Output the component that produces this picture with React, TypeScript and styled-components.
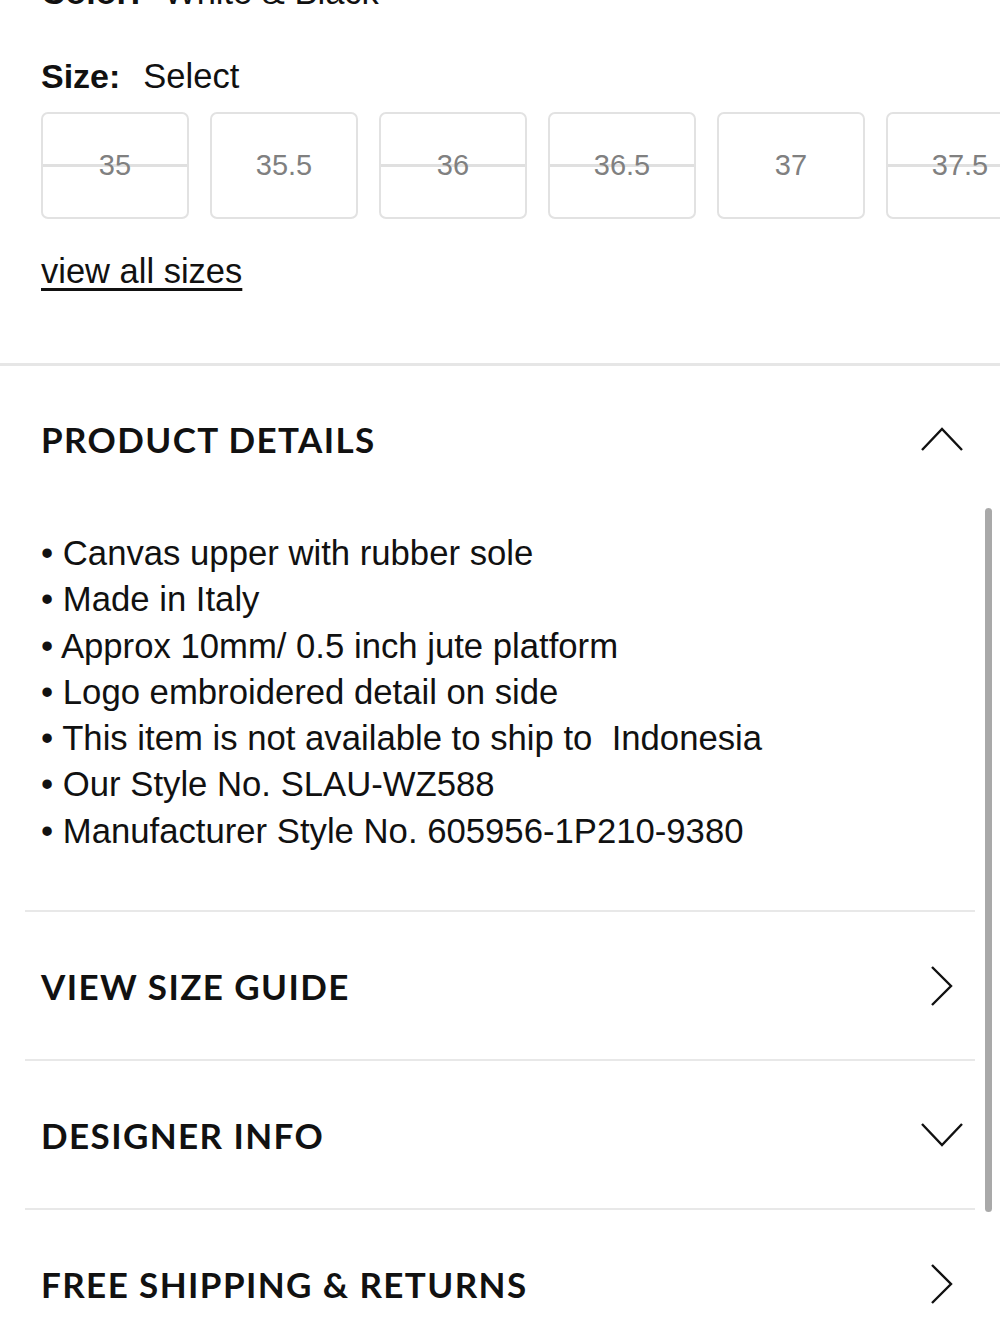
import styled, { createGlobalStyle } from "styled-components";

const GlobalStyle = createGlobalStyle`
  html, body {
    margin: 0;
    padding: 0;
    background: #fff;
  }
  body {
    font-family: "Liberation Sans", Arial, sans-serif;
    color: #111;
    overflow: hidden;
  }
`;

const sizes = [
  { label: "35", available: false },
  { label: "35.5", available: true },
  { label: "36", available: false },
  { label: "36.5", available: false },
  { label: "37", available: true },
  { label: "37.5", available: false },
];

const details = [
  "Canvas upper with rubber sole",
  "Made in Italy",
  "Approx 10mm/ 0.5 inch jute platform",
  "Logo embroidered detail on side",
  "This item is not available to ship to\u00a0 Indonesia",
  "Our Style No. SLAU-WZ588",
  "Manufacturer Style No. 605956-1P210-9380",
];

function Chevron({ dir }: { dir: "up" | "down" | "right" }) {
  if (dir === "right") {
    return (
      <svg width="44" height="44" viewBox="0 0 44 44">
        <polyline points="12,3 31,22 12,41" fill="none" stroke="#111" strokeWidth="2.4" />
      </svg>
    );
  }
  const pts = dir === "up" ? "1,33 21,12 41,33" : "1,11 21,32 41,11";
  return (
    <svg width="44" height="44" viewBox="0 0 44 44">
      <polyline points={pts} fill="none" stroke="#111" strokeWidth="2.4" />
    </svg>
  );
}

export default function App() {
  return (
    <Page>
      <GlobalStyle />
      <SizeSection>
        <OptionRow $top>
          <b>Color:</b>White &amp; Black
        </OptionRow>
        <OptionRow>
          <b>Size:</b>Select
        </OptionRow>
        <SizeGrid>
          {sizes.map((s) => (
            <SizeBox key={s.label} $available={s.available}>
              {s.label}
            </SizeBox>
          ))}
        </SizeGrid>
        <ViewAll href="#">view all sizes</ViewAll>
      </SizeSection>

      <Details>
        <AccordionHeader $first>
          <HeaderTitle>PRODUCT DETAILS</HeaderTitle>
          <IconSlot>
            <Chevron dir="up" />
          </IconSlot>
        </AccordionHeader>
        <DetailList>
          {details.map((d) => (
            <li key={d}>• {d}</li>
          ))}
        </DetailList>
        <AccordionHeader>
          <HeaderTitle>VIEW SIZE GUIDE</HeaderTitle>
          <IconSlot $right>
            <Chevron dir="right" />
          </IconSlot>
        </AccordionHeader>
        <AccordionHeader>
          <HeaderTitle>DESIGNER INFO</HeaderTitle>
          <IconSlot>
            <Chevron dir="down" />
          </IconSlot>
        </AccordionHeader>
        <AccordionHeader>
          <HeaderTitle>FREE SHIPPING &amp; RETURNS</HeaderTitle>
          <IconSlot $right>
            <Chevron dir="right" />
          </IconSlot>
        </AccordionHeader>
        <ScrollThumb />
      </Details>
    </Page>
  );
}

const Page = styled.main`
  width: 1000px;
  height: 1333px;
  overflow: hidden;
  background: #fff;
`;

const SizeSection = styled.section`
  padding: 0 0 72px 41px;
  border-bottom: 3px solid #e6e6e6;
`;

const OptionRow = styled.div<{ $top?: boolean }>`
  font-size: 34.5px;
  line-height: 40px;
  height: 40px;
  margin-top: ${(p) => (p.$top ? "-28px" : "44px")};
  color: #111;

  b {
    font-weight: 700;
    font-size: 34px;
    margin-right: 23px;
  }
`;

const SizeGrid = styled.div`
  display: flex;
  gap: 21px;
  margin-top: 16px;
  overflow: hidden;
`;

const SizeBox = styled.div<{ $available: boolean }>`
  flex: 0 0 148px;
  height: 107px;
  box-sizing: border-box;
  border: 2px solid #e2e2e2;
  border-radius: 7px;
  display: flex;
  align-items: center;
  justify-content: center;
  font-size: 29px;
  color: #808080;
  background: ${(p) =>
    p.$available
      ? "#fff"
      : "linear-gradient(to bottom, transparent calc(50% - 2px), #e0e0e0 calc(50% - 2px), #e0e0e0 calc(50% + 1px), transparent calc(50% + 1px))"};
`;

const ViewAll = styled.a`
  display: inline-block;
  margin-top: 32px;
  font-size: 34.5px;
  line-height: 40px;
  color: #111;
  text-decoration: underline;
  text-decoration-thickness: 3px;
  text-underline-offset: 5px;
`;

const Details = styled.section`
  position: relative;
  padding: 0 25px;
`;

const AccordionHeader = styled.div<{ $first?: boolean }>`
  display: flex;
  align-items: center;
  justify-content: space-between;
  height: ${(p) => (p.$first ? "146px" : "147px")};
  padding: 0 14px 0 16px;
  border-top: ${(p) => (p.$first ? "none" : "2px solid #e8e8e8")};
`;

const HeaderTitle = styled.h3`
  margin: 0;
  font-family: Lato, "Open Sans", sans-serif;
  font-weight: 700;
  font-size: 35px;
  letter-spacing: 1.4px;
  color: #111;
`;

const IconSlot = styled.span<{ $right?: boolean }>`
  display: flex;
  margin-right: ${(p) => (p.$right ? "-3px" : "-4px")};
`;

const DetailList = styled.ul`
  list-style: none;
  margin: 18px 0 0;
  padding: 0 16px 56px;
  font-size: 34.7px;
  line-height: 46.3px;
  color: #111;
`;

const ScrollThumb = styled.div`
  position: absolute;
  right: 8px;
  top: 142px;
  width: 7px;
  height: 704px;
  border-radius: 4px;
  background: #a9a9a9;
`;
